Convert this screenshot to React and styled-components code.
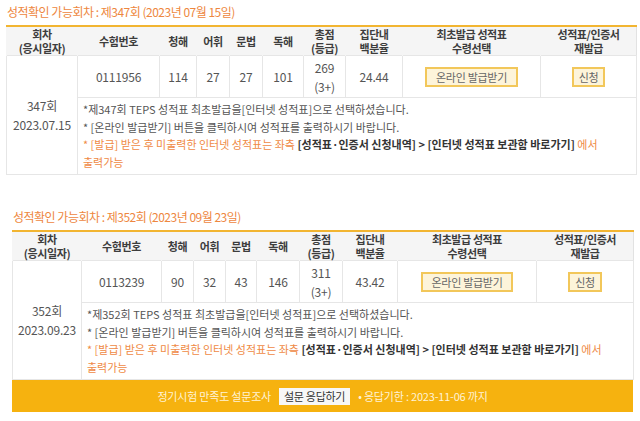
import React from "react";
import styled, { createGlobalStyle } from "styled-components";

const Global = createGlobalStyle`
  html, body { margin: 0; padding: 0; background: #fff; }
  body { font-family: "Noto Sans CJK KR", "Noto Sans", sans-serif; color: #555; }
`;

const Page = styled.div`
  padding: 4px 4px 0 6px;
  width: 640px;
  box-sizing: border-box;
`;

const Section = styled.section`
  margin-left: ${(p) => p.$inset || 0}px;
  width: ${(p) => p.$width}px;
  margin-bottom: ${(p) => p.$gap || 0}px;
`;

const Title = styled.h3`
  margin: 0 0 6px 1px;
  font-size: 12px;
  font-weight: 400;
  letter-spacing: -0.5px;
  line-height: 15px;
  color: #ee8740;
`;

const Table = styled.table`
  width: 100%;
  table-layout: fixed;
  border-collapse: collapse;
  border-top: 2px solid #f2b531;
  border-left: 1px solid #e2e2e2;
  border-right: 1px solid #e2e2e2;
  border-bottom: 1px solid #e2e2e2;
`;

const Th = styled.th`
  background: #f5f5f5;
  color: #3d3d3d;
  font-size: 11px;
  font-weight: 700;
  letter-spacing: -0.4px;
  line-height: 14px;
  padding: 0 1px;
  height: 28px;
  text-align: center;
  vertical-align: middle;
  border-left: 1px solid #f5f5f5;
`;

const Td = styled.td`
  border: 1px solid #e6e6e6;
  font-size: 12px;
  letter-spacing: -0.2px;
  color: #555;
  line-height: 19px;
  text-align: center;
  vertical-align: middle;
  padding: 1px 1px;
  height: 39px;
`;

const NoticeCell = styled.td`
  border: 1px solid #e6e6e6;
  padding: 3px 6px 3px 5px;
  height: ${(p) => p.$h}px;
  text-align: left;
  vertical-align: middle;
  font-size: 11px;
  letter-spacing: 0;
  line-height: 17.5px;
  color: #555;
`;

const Line = styled.div`
  color: ${(p) => (p.$accent ? "#ef8a45" : "#555")};
`;

const Strong = styled.b`
  color: #333;
  font-weight: 700;
`;

const Btn = styled.button`
  font-family: inherit;
  font-size: 11px;
  letter-spacing: -0.3px;
  color: #666;
  background: #fdf4da;
  border: 2px solid #f2c75a;
  padding: 0 ${(p) => (p.$wide ? 9 : 5)}px;
  height: 20px;
  line-height: 16px;
  cursor: pointer;
`;

const Footer = styled.div`
  background: #f6b20f;
  height: 32px;
  display: flex;
  align-items: center;
  justify-content: center;
  gap: 6px;
  font-size: 11px;
  letter-spacing: -0.2px;
  color: #fff3d6;
`;

const SurveyBtn = styled.button`
  font-family: inherit;
  font-size: 11px;
  letter-spacing: -0.3px;
  color: #333;
  background: #f7f7f7;
  border: 0;
  height: 17px;
  padding: 0 5px;
  margin-left: 2px;
  margin-right: 2px;
`;

const headers = [
  ["회차", "(응시일자)"],
  ["수험번호"],
  ["청해"],
  ["어휘"],
  ["문법"],
  ["독해"],
  ["총점", "(등급)"],
  ["집단내", "백분율"],
  ["최초발급 성적표", "수령선택"],
  ["성적표/인증서", "재발급"],
];

function ScoreTable({ widths, data, noticeH }) {
  return (
    <Table>
      <colgroup>
        {widths.map((w, i) => (
          <col key={i} style={{ width: w }} />
        ))}
      </colgroup>
      <thead>
        <tr>
          {headers.map((h, i) => (
            <Th key={i}>
              {h.map((t, j) => (
                <div key={j}>{t}</div>
              ))}
            </Th>
          ))}
        </tr>
      </thead>
      <tbody>
        <tr>
          <Td rowSpan={2}>
            <div>{data.round}회</div>
            <div>{data.date}</div>
          </Td>
          <Td>{data.id}</Td>
          <Td>{data.l}</Td>
          <Td>{data.v}</Td>
          <Td>{data.g}</Td>
          <Td>{data.r}</Td>
          <Td>
            <div>{data.total}</div>
            <div>(3+)</div>
          </Td>
          <Td>{data.pct}</Td>
          <Td>
            <Btn $wide>온라인 발급받기</Btn>
          </Td>
          <Td>
            <Btn>신청</Btn>
          </Td>
        </tr>
        <tr>
          <NoticeCell colSpan={9} $h={noticeH}>
            <Line>*제{data.round}회 TEPS 성적표 최초발급을[인터넷 성적표]으로 선택하셨습니다.</Line>
            <Line>* [온라인 발급받기] 버튼을 클릭하시여 성적표를 출력하시기 바랍니다.</Line>
            <Line $accent>
              * [발급] 받은 후 미출력한 인터넷 성적표는 좌측{" "}
              <Strong>[성적표·인증서 신청내역] &gt; [인터넷 성적표 보관함 바로가기]</Strong> 에서
              <br />
              출력가능
            </Line>
          </NoticeCell>
        </tr>
      </tbody>
    </Table>
  );
}

export default function App() {
  return (
    <Page>
      <Global />
      <Section $width={630} $gap={34}>
        <Title>성적확인 가능회차 : 제347회 (2023년 07월 15일)</Title>
        <ScoreTable
          widths={[71, 82, 37, 33, 33, 41, 42, 57, 138, 96]}
          noticeH={70}
          data={{
            round: 347,
            date: "2023.07.15",
            id: "0111956",
            l: 114,
            v: 27,
            g: 27,
            r: 101,
            total: 269,
            pct: "24.44",
          }}
        />
      </Section>
      <Section $width={621} $inset={6}>
        <Title>성적확인 가능회차 : 제352회 (2023년 09월 23일)</Title>
        <ScoreTable
          widths={[69, 80, 32, 32, 31, 43, 43, 55, 139, 97]}
          noticeH={69}
          data={{
            round: 352,
            date: "2023.09.23",
            id: "0113239",
            l: 90,
            v: 32,
            g: 43,
            r: 146,
            total: 311,
            pct: "43.42",
          }}
        />
        <Footer>
          <span>정기시험 만족도 설문조사</span>
          <SurveyBtn>설문 응답하기</SurveyBtn>
          <span>• 응답기한 : 2023-11-06 까지</span>
        </Footer>
      </Section>
    </Page>
  );
}
